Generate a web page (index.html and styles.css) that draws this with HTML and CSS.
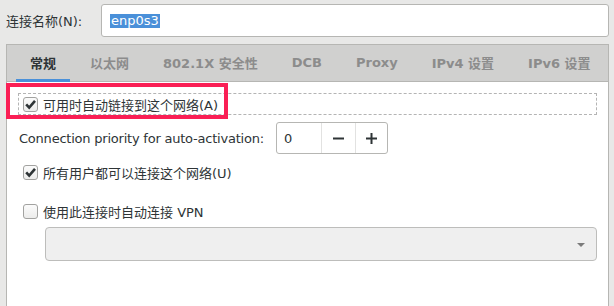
FILE: index.html
```html
<!DOCTYPE html>
<html lang="zh-CN">
<head>
  <meta charset="UTF-8" />
  <title>编辑 enp0s3</title>
  <link rel="stylesheet" href="styles.css">
</head>
<body>

<!-- 连接名称 -->
<div class="name-row">
    <label class="name-label">连接名称(N):</label>
    <div class="name-input"><span class="selected">enp0s3</span></div>
</div>

<div class="notebook">
    <div class="tabs">
        <div class="tab active">常规</div>
        <div class="tab">以太网</div>
        <div class="tab">802.1X 安全性</div>
        <div class="tab">DCB</div>
        <div class="tab">Proxy</div>
        <div class="tab">IPv4 设置</div>
        <div class="tab">IPv6 设置</div>
    </div>

    <div class="page">
        <div class="check-row focused">
            <span class="check checked">
                <svg width="15" height="15" viewBox="0 0 15 15"><polyline points="3.2,7.4 6.2,10.6 12,3.8" fill="none" stroke="#2e3436" stroke-width="2.6" stroke-linejoin="miter"/></svg>
            </span>
            <span>可用时自动链接到这个网络(A)</span>
        </div>

        <div class="prio-row">
            <span class="prio-label">Connection priority for auto-activation:</span>
            <div class="spin">
                <div class="spin-value">0</div>
                <div class="spin-btn"><svg width="11" height="11" viewBox="0 0 11 11"><rect x="0" y="4.5" width="11" height="2" fill="#2e3436"/></svg></div>
                <div class="spin-btn last"><svg width="11" height="11" viewBox="0 0 11 11"><rect x="0" y="4.5" width="11" height="2" fill="#2e3436"/><rect x="4.5" y="0" width="2" height="11" fill="#2e3436"/></svg></div>
            </div>
        </div>

        <div class="check-row all-users">
            <span class="check checked">
                <svg width="15" height="15" viewBox="0 0 15 15"><polyline points="3.2,7.4 6.2,10.6 12,3.8" fill="none" stroke="#2e3436" stroke-width="2.6" stroke-linejoin="miter"/></svg>
            </span>
            <span>所有用户都可以连接这个网络(U)</span>
        </div>

        <div class="check-row vpn">
            <span class="check"></span>
            <span>使用此连接时自动连接 VPN</span>
        </div>

        <div class="combo"><span class="combo-arrow"></span></div>
    </div>

    <!-- 标注框 -->
    <div class="highlight"></div>
</div>

</body>
</html>
```

FILE: styles.css
```css
html, body {
    margin: 0;
    height: 100%;
    overflow: hidden;
}
body {
    display: flex;
    flex-direction: column;
    background: #e8e8e7;
    color: #2e3436;
    font-family: "DejaVu Sans", "Noto Sans CJK SC", sans-serif;
    font-size: 13px;
}

/* 连接名称 */
.name-row {
    display: flex;
    align-items: center;
    padding: 4px 5px 0 6px;
}
.name-label {
    width: 95px;
}
.name-input {
    flex: 1;
    height: 31px;
    display: flex;
    align-items: center;
    padding-left: 8px;
    background: #fff;
    border: 1px solid #b6b6b3;
    border-radius: 3px;
}
.name-input .selected {
    background: #4a90d9;
    color: #fff;
    padding: 0 1px;
    line-height: 14px;
}

/* 选项卡 */
.notebook {
    position: relative;
    flex: 1;
    display: flex;
    flex-direction: column;
    margin: 7px 5px 0 6px;
}
.tabs {
    display: flex;
    height: 36px;
    padding-left: 6px;
    background: #d0d0cf;
    border: 1px solid #b6b6b3;
}
.tab {
    position: relative;
    display: flex;
    align-items: center;
    padding: 0 17px 1px;
    font-weight: bold;
    color: #8c8c8c;
}
.tab.active {
    color: #2e3436;
}
.tab.active:after {
    content: "";
    position: absolute;
    left: 3px;
    right: 3px;
    bottom: -1px;
    height: 3px;
    background: #4a90d9;
}
.page {
    flex: 1;
    display: flex;
    flex-direction: column;
    padding: 11px 11px 0 11px;
    background: #fff;
    border-left: 1px solid #b6b6b3;
    border-right: 1px solid #b6b6b3;
}

/* 复选框行 */
.check-row {
    display: flex;
    align-items: center;
    gap: 5px;
    height: 20px;
    padding-left: 4px;
    border: 1px dashed transparent;
}
.check-row.focused {
    border-color: #b4b4b4;
}
.check-row.all-users {
    margin-top: 7px;
}
.check-row.vpn {
    margin-top: 17px;
}
.check {
    width: 13px;
    height: 13px;
    display: flex;
    align-items: center;
    justify-content: center;
    border: 1px solid #a2a2a0;
    border-radius: 3px;
    background: linear-gradient(#fbfbfb, #ececeb);
}
.check svg {
    flex: none;
}

/* 优先级 */
.prio-row {
    display: flex;
    align-items: center;
    gap: 12px;
    margin-top: 7px;
    padding-left: 1px;
}
.prio-label {
    letter-spacing: -0.22px;
}
.spin {
    display: flex;
    height: 30px;
    border: 1px solid #b6b6b3;
    border-radius: 3px;
    background: #fff;
}
.spin-value {
    width: 37px;
    padding-left: 7px;
    display: flex;
    align-items: center;
}
.spin-btn {
    width: 33px;
    display: flex;
    align-items: center;
    justify-content: center;
    border-left: 1px solid #e2e2e1;
}
.spin-btn.last {
    width: 31px;
}

/* 下拉框 */
.combo {
    position: relative;
    height: 32px;
    margin: 5px 0 0 27px;
    background: #efefef;
    border: 1px solid #bdbdbb;
    border-radius: 4px;
}
.combo-arrow {
    position: absolute;
    right: 11px;
    top: 15px;
    width: 0;
    height: 0;
    border-left: 4.5px solid transparent;
    border-right: 4.5px solid transparent;
    border-top: 4px solid #7b7b7b;
}

/* 红色标注框 */
.highlight {
    position: absolute;
    left: 0;
    top: 39px;
    width: 214px;
    height: 28px;
    border: 4px solid #fa1f55;
}
```
